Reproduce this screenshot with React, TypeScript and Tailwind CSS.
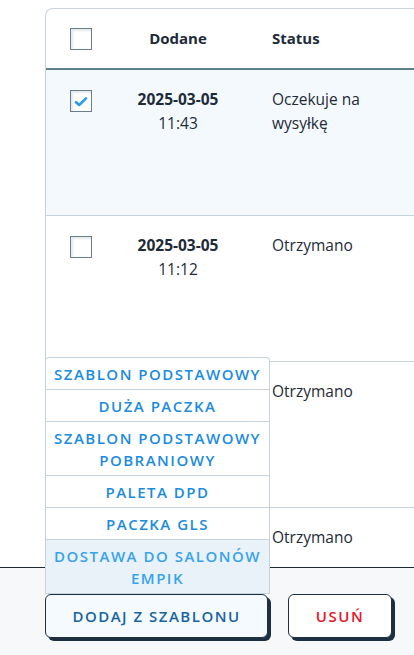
import React from "react";

// ── Data ───────────────────────────────────────────────────────────────────

interface Row {
    date: string;
    time: string;
    status: string;
    checked: boolean;
}

const ROWS: Row[] = [
    { date: "2025-03-05", time: "11:43", status: "Oczekuje na wysyłkę", checked: true },
    { date: "2025-03-05", time: "11:12", status: "Otrzymano", checked: false },
    { date: "2025-03-05", time: "10:58", status: "Otrzymano", checked: false },
    { date: "2025-03-04", time: "16:20", status: "Otrzymano", checked: false },
];

const TEMPLATES = [
    "Szablon podstawowy",
    "Duża paczka",
    "Szablon podstawowy pobraniowy",
    "Paleta DPD",
    "Paczka GLS",
    "Dostawa do salonów Empik",
];

// ── Pieces ─────────────────────────────────────────────────────────────────

function Checkbox({ checked }: { checked: boolean }) {
    return (
        <span className="flex h-[22px] w-[22px] items-center justify-center border-[1.5px] border-[#687f90] bg-white shadow-[inset_3px_3px_2px_-1px_#e6eaee]">
            {checked && (
                <svg width="14" height="11" viewBox="0 0 14 11" fill="none">
                    <path
                        d="M2 6.2 L5.2 9 L12 2.4"
                        stroke="#2a9cf0"
                        strokeWidth="2.6"
                        strokeLinecap="round"
                        strokeLinejoin="round"
                    />
                </svg>
            )}
        </span>
    );
}

// ── Component ──────────────────────────────────────────────────────────────

export default function App() {
    return (
        <div
            className="relative flex h-[655px] w-[414px] flex-col overflow-hidden bg-white text-[#1d2b38]"
            style={{ fontFamily: '"Open Sans", "Noto Sans", sans-serif' }}
        >
            {/* Table */}
            <div className="h-[567px] overflow-hidden pl-[45px] pt-2">
                <div className="-mr-6 rounded-tl-lg border-l border-t border-[#c6d3dd]">
                    {/* Header */}
                    <div className="grid h-[61px] grid-cols-[70px_124px_1fr] items-center border-b-2 border-[#5f7d90] text-[15px] font-bold">
                        <div className="pl-6">
                            <Checkbox checked={false} />
                        </div>
                        <div className="text-center">Dodane</div>
                        <div className="pl-8">Status</div>
                    </div>

                    {/* Rows */}
                    {ROWS.map((r, i) => (
                        <div
                            key={i}
                            className={`grid h-[146px] grid-cols-[70px_124px_1fr] items-start border-b border-[#c6d3dd] pt-[17px] text-[15.5px] leading-6 ${
                                r.checked ? "bg-[#f4f9fe]" : "bg-white"
                            }`}
                        >
                            <div className="pl-6 pt-[3px]">
                                <Checkbox checked={r.checked} />
                            </div>
                            <div className="text-center">
                                <div className="font-bold">{r.date}</div>
                                <div>{r.time}</div>
                            </div>
                            <div className="w-[140px] pl-8">{r.status}</div>
                        </div>
                    ))}
                </div>
            </div>

            {/* Footer */}
            <div className="flex flex-1 items-start gap-5 border-t border-[#1c2a36] bg-[#f6f8fa] pl-[45px] pt-[26px]">
                <div className="relative">
                    {/* Template menu */}
                    <div className="absolute bottom-full left-0 w-[225px] overflow-hidden rounded-t border border-b-0 border-[#c6d3dd] bg-white">
                        {TEMPLATES.map((t, i) => (
                            <div
                                key={t}
                                className={`border-b border-[#c6d3dd] px-2 pb-1 pt-[5px] text-center text-[15px] font-semibold uppercase leading-[22px] tracking-[1.5px] ${
                                    i === TEMPLATES.length - 1
                                        ? "bg-[#e9f1f9] text-[#38a3e8]"
                                        : "text-[#1b8be0]"
                                }`}
                            >
                                {t}
                            </div>
                        ))}
                    </div>
                    <button className="h-[44px] w-[223px] rounded-md border border-[#1c3042] bg-[#f5fafe] text-[15px] font-semibold uppercase tracking-[1.5px] text-[#17649f] shadow-[3px_3px_0_#1c3042]">
                        Dodaj z szablonu
                    </button>
                </div>
                <button className="h-[44px] w-[104px] rounded-md border border-[#1c3042] bg-white text-[15px] font-semibold uppercase tracking-[1.5px] text-[#e5142b] shadow-[3px_3px_0_#1c3042]">
                    Usuń
                </button>
            </div>
        </div>
    );
}
